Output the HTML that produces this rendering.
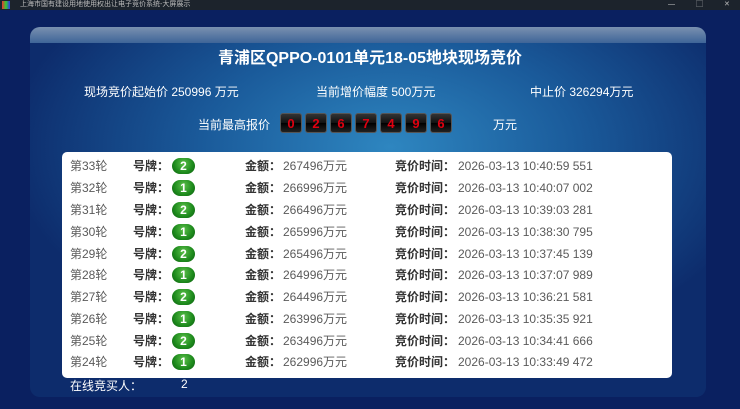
<!DOCTYPE html><html><head><meta charset="utf-8"><style>
*{margin:0;padding:0;box-sizing:border-box}
body{width:740px;height:409px;overflow:hidden;background:#0a2060;font-family:"Liberation Sans","Noto Sans CJK SC",sans-serif;position:relative}
.tb{position:absolute;left:0;top:0;width:740px;height:10px;background:#1c232c;color:#bbb;font-size:7px;line-height:9px}
.panel{position:absolute;left:30px;top:27px;width:676px;height:370px;border-radius:10px;background:radial-gradient(ellipse 380px 220px at 360px 120px,#2e86c0 0%,#1a5a9a 50%,#0d2c6c 100%)}
.band{position:absolute;left:0;top:0;width:100%;height:16px;border-radius:10px 10px 0 0;background:linear-gradient(#7a90b0,#3e6598)}
.t{position:absolute;color:#fff;white-space:nowrap}
.digits{position:absolute;left:280px;top:113px;display:flex;gap:3px}
.digits span{width:22px;height:20px;border-radius:3px;background:linear-gradient(#333 0%,#111 50%,#000 51%,#222 100%);color:#e00010;font-weight:bold;font-size:13px;text-align:center;line-height:20px;border:1px solid #555}
.tbl{position:absolute;left:62px;top:152px;width:610px;height:226px;background:#fff;border-radius:5px}
.r{position:absolute;left:0;height:20px;width:100%;font-size:12px;color:#5a5a5a;line-height:20px}
.r span{position:absolute;white-space:nowrap}
.b{font-weight:bold;color:#333}
.bd{width:23px;height:16px;top:2px;border-radius:8px;background:radial-gradient(circle at 50% 35%,#5cc04a,#1d8a1c 60%,#0d5a10);color:#fff;font-weight:bold;font-size:12px;text-align:center;line-height:16px}
</style></head><body>
<div class="tb"><span style="position:absolute;left:2px;top:1px;width:8px;height:8px;background:linear-gradient(90deg,#e33,#3c3,#33e)"></span><span style="position:absolute;left:20px">上海市国有建设用地使用权出让电子竞价系统-大屏展示</span><span style="position:absolute;left:668px;color:#ccc">—</span><span style="position:absolute;left:696px">▢</span><span style="position:absolute;left:724px">✕</span></div>
<div class="panel"><div class="band"></div></div>
<div class="t" style="left:0;width:740px;text-align:center;top:44px;font-size:16px;font-weight:bold">青浦区QPPO-0101单元18-05地块现场竞价</div>
<div class="t" style="left:84px;top:83px;font-size:12px">现场竞价起始价 250996 万元</div>
<div class="t" style="left:316px;top:83px;font-size:12px">当前增价幅度 500万元</div>
<div class="t" style="left:530px;top:83px;font-size:12px">中止价 326294万元</div>
<div class="t" style="left:198px;top:116px;font-size:12px">当前最高报价</div>
<div class="digits"><span>0</span><span>2</span><span>6</span><span>7</span><span>4</span><span>9</span><span>6</span></div>
<div class="t" style="left:493px;top:116px;font-size:12px">万元</div>
<div class="tbl">
<div class="r" style="top:4px"><span style="left:8px">第33轮</span><span class="b" style="left:71px">号牌：</span><span class="bd" style="left:110px">2</span><span class="b" style="left:183px">金额：</span><span style="left:221px">267496万元</span><span class="b" style="left:333px">竞价时间：</span><span style="left:396px">2026-03-13 10:40:59 551</span></div>
<div class="r" style="top:26px"><span style="left:8px">第32轮</span><span class="b" style="left:71px">号牌：</span><span class="bd" style="left:110px">1</span><span class="b" style="left:183px">金额：</span><span style="left:221px">266996万元</span><span class="b" style="left:333px">竞价时间：</span><span style="left:396px">2026-03-13 10:40:07 002</span></div>
<div class="r" style="top:48px"><span style="left:8px">第31轮</span><span class="b" style="left:71px">号牌：</span><span class="bd" style="left:110px">2</span><span class="b" style="left:183px">金额：</span><span style="left:221px">266496万元</span><span class="b" style="left:333px">竞价时间：</span><span style="left:396px">2026-03-13 10:39:03 281</span></div>
<div class="r" style="top:70px"><span style="left:8px">第30轮</span><span class="b" style="left:71px">号牌：</span><span class="bd" style="left:110px">1</span><span class="b" style="left:183px">金额：</span><span style="left:221px">265996万元</span><span class="b" style="left:333px">竞价时间：</span><span style="left:396px">2026-03-13 10:38:30 795</span></div>
<div class="r" style="top:92px"><span style="left:8px">第29轮</span><span class="b" style="left:71px">号牌：</span><span class="bd" style="left:110px">2</span><span class="b" style="left:183px">金额：</span><span style="left:221px">265496万元</span><span class="b" style="left:333px">竞价时间：</span><span style="left:396px">2026-03-13 10:37:45 139</span></div>
<div class="r" style="top:113px"><span style="left:8px">第28轮</span><span class="b" style="left:71px">号牌：</span><span class="bd" style="left:110px">1</span><span class="b" style="left:183px">金额：</span><span style="left:221px">264996万元</span><span class="b" style="left:333px">竞价时间：</span><span style="left:396px">2026-03-13 10:37:07 989</span></div>
<div class="r" style="top:135px"><span style="left:8px">第27轮</span><span class="b" style="left:71px">号牌：</span><span class="bd" style="left:110px">2</span><span class="b" style="left:183px">金额：</span><span style="left:221px">264496万元</span><span class="b" style="left:333px">竞价时间：</span><span style="left:396px">2026-03-13 10:36:21 581</span></div>
<div class="r" style="top:157px"><span style="left:8px">第26轮</span><span class="b" style="left:71px">号牌：</span><span class="bd" style="left:110px">1</span><span class="b" style="left:183px">金额：</span><span style="left:221px">263996万元</span><span class="b" style="left:333px">竞价时间：</span><span style="left:396px">2026-03-13 10:35:35 921</span></div>
<div class="r" style="top:179px"><span style="left:8px">第25轮</span><span class="b" style="left:71px">号牌：</span><span class="bd" style="left:110px">2</span><span class="b" style="left:183px">金额：</span><span style="left:221px">263496万元</span><span class="b" style="left:333px">竞价时间：</span><span style="left:396px">2026-03-13 10:34:41 666</span></div>
<div class="r" style="top:200px"><span style="left:8px">第24轮</span><span class="b" style="left:71px">号牌：</span><span class="bd" style="left:110px">1</span><span class="b" style="left:183px">金额：</span><span style="left:221px">262996万元</span><span class="b" style="left:333px">竞价时间：</span><span style="left:396px">2026-03-13 10:33:49 472</span></div>
</div>
<div class="t" style="left:70px;top:377px;font-size:12px">在线竞买人：</div>
<div class="t" style="left:181px;top:377px;font-size:12px">2</div>
</body></html>
